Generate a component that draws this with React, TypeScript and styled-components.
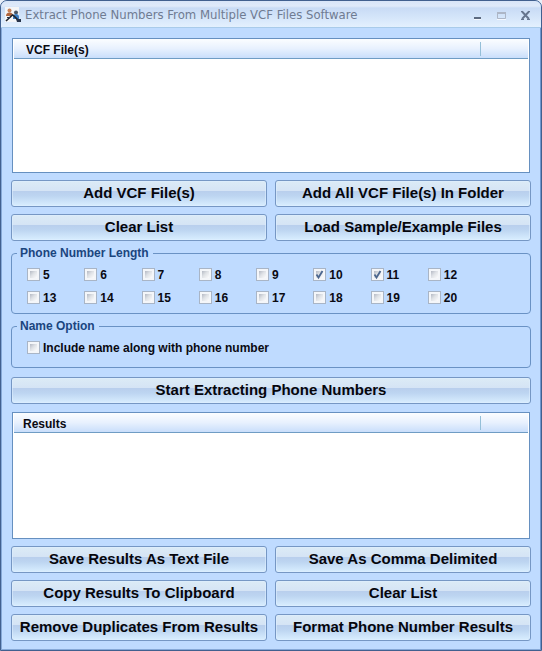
import React, { useState } from "react";
import styled, { createGlobalStyle } from "styled-components";

const sans = `"Liberation Sans", Arial, sans-serif`;

const GlobalStyle = createGlobalStyle`
  *, *::before, *::after { box-sizing: border-box; }
  body { margin: 0; background: #e9eff8; }
`;

const Window = styled.div`
  min-height: 100vh;
  display: flex;
  flex-direction: column;
  border: 1px solid #41608f;
  border-radius: 7px 7px 0 0;
  background: #bfdbff;
  box-shadow: inset 1px 0 #86a9d8, inset -1px 0 #6f98cf, inset 0 -1px #86a9d8;
  overflow: hidden;
  font: bold 12px/14px ${sans};
  color: #0a0a12;
`;

const TitleBar = styled.header`
  display: flex;
  align-items: center;
  height: 27px;
  padding: 2px 8px 0 4px;
  border-bottom: 1px solid #a9cbea;
  background: linear-gradient(#d8e5f8 0, #dfeafa 5px, #c8dbf5 7px, #d3e4f9 15px, #e3f0fe 26px);
`;

const Title = styled.h1`
  flex: 1;
  margin: 0 0 0 3px;
  font: 13px/18px "DejaVu Sans Condensed", "DejaVu Sans", sans-serif;
  font-stretch: condensed;
  color: #6f7b92;
  white-space: nowrap;
`;

const WindowControls = styled.div`
  display: flex;
  gap: 8px;
`;

const ControlButton = styled.button`
  display: grid;
  place-items: center;
  width: 16px;
  height: 16px;
  padding: 0;
  border: 0;
  background: none;
`;

const Main = styled.main`
  flex: 1;
  display: flex;
  flex-direction: column;
  padding: 10px 10px 9px;
`;

const ListBox = styled.div<{ $height: number }>`
  flex: 1 0 ${(p) => p.$height}px;
  margin: 0 1px;
  padding: 0 1px;
  border: 1px solid #6690c0;
  background: #fff;
`;

const ListTable = styled.table`
  width: 100%;
  border-spacing: 0;
  table-layout: fixed;
  background: linear-gradient(#fbfdff, #e8f1fe 50%, #c9defb);
  border-bottom: 1px solid #6f9cc4;
`;

const HeaderCell = styled.th<{ $indent: number }>`
  height: 19px;
  padding: 2px 0 0 ${(p) => p.$indent}px;
  text-align: left;
  font-weight: bold;
`;

const SpareCell = styled.td`
  width: 48px;
  padding: 2px 0;
`;

const Divider = styled.div`
  height: 14px;
  border-left: 1px solid #94bfd8;
`;

const ButtonGrid = styled.div<{ $columns?: number }>`
  display: grid;
  grid-template-columns: repeat(${(p) => p.$columns ?? 2}, 1fr);
  gap: 7px 8px;
`;

const ActionButton = styled.button`
  height: 27px;
  padding: 0 4px 1px;
  border: 1px solid #7697c4;
  border-radius: 3px;
  background: linear-gradient(#dcebf6 0, #d5e4f5 38%, #b9cfed 42%, #bdd5f1 60%, #d9eeff 100%);
  box-shadow: inset 0 0 0 1px rgba(222, 238, 255, 0.6);
  font: bold 15px/18px ${sans};
  color: #06060c;
  white-space: nowrap;
`;

const Group = styled.fieldset<{ $bottom: number }>`
  min-width: 0;
  margin: 0;
  padding: 7px 45px ${(p) => p.$bottom}px 15px;
  border: 1px solid #6a92c4;
  border-radius: 4px;
`;

const Legend = styled.legend`
  margin-left: -10px;
  padding: 0 4px 0 3px;
  color: #1b457e;
`;

const CheckGrid = styled.div`
  display: grid;
  grid-template-columns: repeat(8, 1fr);
  gap: 8px 0;
`;

const CheckLabel = styled.label`
  display: flex;
  align-items: center;
  gap: 3px;
  height: 15px;
  white-space: nowrap;
`;

const CheckCell = styled.span`
  display: grid;
  width: 13px;
  height: 13px;
  & > * { grid-area: 1 / 1; }
`;

const CheckInput = styled.input`
  appearance: none;
  width: 13px;
  height: 13px;
  margin: 0;
  padding: 2px;
  border: 1px solid #a9b5c6;
  background: linear-gradient(135deg, #b4b9c4, #dfe2e6 45%, #fcfcfd) content-box, #f4f6f9;
`;

const CheckMark = styled.svg`
  width: 13px;
  height: 13px;
  pointer-events: none;
`;

const Spacer = styled.div<{ $size: number }>`
  flex: none;
  height: ${(p) => p.$size}px;
`;

function AppIcon() {
  return (
    <svg width="17" height="17" viewBox="0 0 17 17" aria-hidden="true">
      <path d="M0 0h14v15H0z" fill="#f4f5f7" />
      <circle cx="4.5" cy="3.5" r="2" fill="#c98258" />
      <path d="M1 9q0-3.500 3.500-3.500T8 9z" fill="#b0643c" />
      <circle cx="11" cy="5.500" r="2" fill="#4a5664" />
      <path d="M8 10q0-3 3-3t3 3v2H8z" fill="#3e7ec2" />
      <path d="M1 14 8 7.500M8 8l5 5" stroke="#20252e" strokeWidth="1.700" />
      <path d="M2 10h3v1H2zM11 12h5v3h-4z" fill="#28344a" />
    </svg>
  );
}

function Check({ label, initial = false }: { label: string; initial?: boolean }) {
  const [on, setOn] = useState(initial);
  return (
    <CheckLabel>
      <CheckCell>
        <CheckInput type="checkbox" checked={on} onChange={(e) => setOn(e.target.checked)} />
        {on && (
          <CheckMark viewBox="0 0 13 13" aria-hidden="true">
            <path d="M3.500 6.500 5.500 9.500 9.500 3" fill="none" stroke="#4c678f" strokeWidth="1.800" />
          </CheckMark>
        )}
      </CheckCell>
      {label}
    </CheckLabel>
  );
}

function List({ title, indent, height }: { title: string; indent: number; height: number }) {
  return (
    <ListBox $height={height}>
      <ListTable>
        <thead>
          <tr>
            <HeaderCell $indent={indent}>{title}</HeaderCell>
            <SpareCell><Divider /></SpareCell>
          </tr>
        </thead>
      </ListTable>
    </ListBox>
  );
}

const lengths = Array.from({ length: 16 }, (_, i) => i + 5);

export default function App() {
  return (
    <>
      <GlobalStyle />
      <Window>
        <TitleBar>
          <AppIcon />
          <Title>Extract Phone Numbers From Multiple VCF Files Software</Title>
          <WindowControls>
            <ControlButton aria-label="Minimize">
              <svg width="11" height="11" viewBox="0 0 11 11"><path d="M2 7h7v2H2z" fill="#5c6a80" /><path d="M2 9h7v1H2z" fill="#f4f8ff" /></svg>
            </ControlButton>
            <ControlButton aria-label="Maximize">
              <svg width="11" height="11" viewBox="0 0 11 11"><path d="M1.500 2.500h8v6h-8z" fill="none" stroke="#adb6c6" /><path d="M1 2h9v2H1z" fill="#adb6c6" /><path d="M1 9h9v1H1z" fill="#f4f8ff" /></svg>
            </ControlButton>
            <ControlButton aria-label="Close">
              <svg width="11" height="11" viewBox="0 0 11 11"><path d="M2 1.500 9 9M9 1.500 2 9" stroke="#66758e" strokeWidth="1.900" /><path d="M1 9.500h3M7 9.500h3M1 1.500h2M8 1.500h2" stroke="#66758e" /></svg>
            </ControlButton>
          </WindowControls>
        </TitleBar>
        <Main>
          <List title="VCF File(s)" indent={12} height={135} />
          <Spacer $size={7} />
          <ButtonGrid>
            <ActionButton>Add VCF File(s)</ActionButton>
            <ActionButton>Add All VCF File(s) In Folder</ActionButton>
            <ActionButton>Clear List</ActionButton>
            <ActionButton>Load Sample/Example Files</ActionButton>
          </ButtonGrid>
          <Spacer $size={5} />
          <Group $bottom={8}>
            <Legend>Phone Number Length</Legend>
            <CheckGrid>
              {lengths.map((n) => (
                <Check key={n} label={String(n)} initial={n === 10 || n === 11} />
              ))}
            </CheckGrid>
          </Group>
          <Spacer $size={5} />
          <Group $bottom={12}>
            <Legend>Name Option</Legend>
            <Check label="Include name along with phone number" />
          </Group>
          <Spacer $size={9} />
          <ButtonGrid $columns={1}>
            <ActionButton>Start Extracting Phone Numbers</ActionButton>
          </ButtonGrid>
          <Spacer $size={8} />
          <List title="Results" indent={9} height={127} />
          <Spacer $size={7} />
          <ButtonGrid>
            <ActionButton>Save Results As Text File</ActionButton>
            <ActionButton>Save As Comma Delimited</ActionButton>
            <ActionButton>Copy Results To Clipboard</ActionButton>
            <ActionButton>Clear List</ActionButton>
            <ActionButton>Remove Duplicates From Results</ActionButton>
            <ActionButton>Format Phone Number Results</ActionButton>
          </ButtonGrid>
        </Main>
      </Window>
    </>
  );
}
